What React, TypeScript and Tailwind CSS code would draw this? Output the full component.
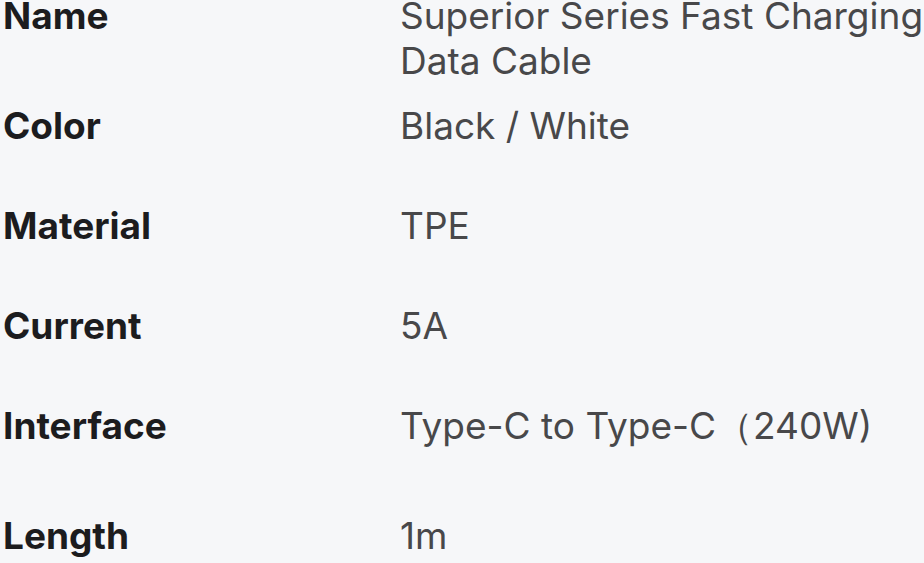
const specs = [
  { label: "Name", value: "Superior Series Fast Charging Data Cable", h: "h-[110px]" },
  { label: "Color", value: "Black / White", h: "h-[100px]" },
  { label: "Material", value: "TPE", h: "h-[100px]" },
  { label: "Current", value: "5A", h: "h-[100px]" },
  { label: "Interface", value: "Type-C to Type-C（240W)", h: "h-[110px]" },
  { label: "Length", value: "1m", h: "h-[100px]" },
];

export default function App() {
  return (
    <div className="w-[924px] h-[563px] overflow-hidden bg-[#f6f7f9] font-['Inter',sans-serif]">
      <div className="-mt-[7px]">
        {specs.map((s) => (
          <div key={s.label} className={`flex ${s.h}`}>
            <div className="w-[400px] shrink-0 pl-[3px] text-[37px] leading-[45px] font-bold text-[#1c1c1e]">
              {s.label}
            </div>
            <div className="flex-1 text-[37px] leading-[45px] text-[#48484a]">
              {s.value}
            </div>
          </div>
        ))}
      </div>
    </div>
  );
}
